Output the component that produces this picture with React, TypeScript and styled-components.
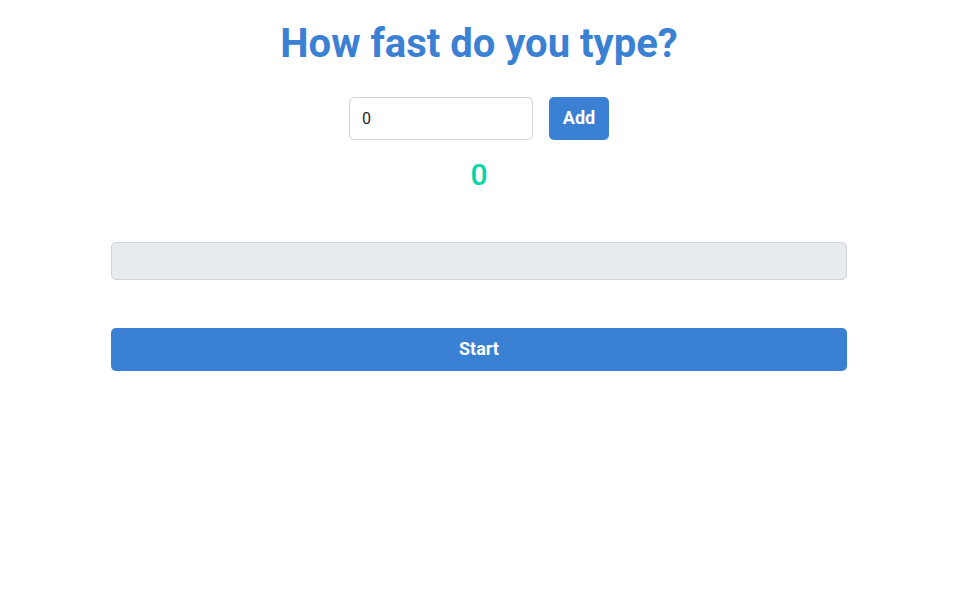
import React, { useState } from "react";
import styled, { createGlobalStyle } from "styled-components";

const Global = createGlobalStyle`
  html, body { margin: 0; padding: 0; background: #fff; }
  body { font-family: Roboto, "Liberation Sans", sans-serif; }
  * { box-sizing: border-box; }
`;

const Page = styled.div`
  width: 958px;
  display: flex;
  flex-direction: column;
  align-items: center;
  padding-top: 18px;
`;

const Title = styled.h1`
  margin: 0;
  font-size: 40px;
  font-weight: 700;
  color: #3a81d4;
  line-height: 52px;
`;

const Row = styled.div`
  display: flex;
  gap: 16px;
  margin-top: 27px;
`;

const NumInput = styled.input`
  width: 184px;
  height: 43px;
  border: 1px solid #ced4da;
  border-radius: 5px;
  padding: 0 12px 1px;
  font-family: Roboto, "Liberation Sans", sans-serif;
  font-size: 16px;
  color: #212529;
  outline: none;
`;

const Button = styled.button<{ $wide?: boolean }>`
  height: 43px;
  width: ${(p) => (p.$wide ? "736px" : "60px")};
  padding: 0 0 2px;
  border: none;
  border-radius: 5px;
  background: #3a81d4;
  color: #fff;
  font-family: Roboto, "Liberation Sans", sans-serif;
  font-size: 18px;
  font-weight: 700;
  cursor: pointer;
`;

const Counter = styled.div`
  margin-top: 16px;
  font-size: 30px;
  font-weight: 500;
  color: #00d6a8;
  line-height: 38px;
`;

const TypeBox = styled.div`
  margin-top: 48px;
  width: 736px;
  height: 38px;
  border: 1px solid #ced4da;
  border-radius: 5px;
  background: #e7ebee;
`;

const StartWrap = styled.div`
  margin-top: 48px;
`;

export default function App() {
  const [value, setValue] = useState("0");
  const [count, setCount] = useState(0);
  return (
    <>
      <Global />
      <Page>
        <Title>How fast do you type?</Title>
        <Row>
          <NumInput value={value} onChange={(e) => setValue(e.target.value)} />
          <Button onClick={() => setCount(count + Number(value || 0))}>Add</Button>
        </Row>
        <Counter>{count}</Counter>
        <TypeBox />
        <StartWrap>
          <Button $wide>Start</Button>
        </StartWrap>
      </Page>
    </>
  );
}
